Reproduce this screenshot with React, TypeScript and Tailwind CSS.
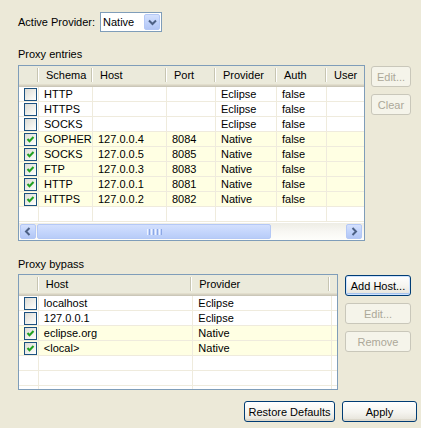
import { ReactNode } from 'react'

type Row = { checked: boolean; cells: string[] }

const entryWidths = ['w-[20px]', 'w-[54px]', 'w-[74px]', 'w-[49px]', 'w-[61px]', 'w-[50px]', 'flex-1']
const entryHeaders = ['', 'Schema', 'Host', 'Port', 'Provider', 'Auth', 'User']
const entryRows: Row[] = [
  { checked: false, cells: ['HTTP', '', '', 'Eclipse', 'false', ''] },
  { checked: false, cells: ['HTTPS', '', '', 'Eclipse', 'false', ''] },
  { checked: false, cells: ['SOCKS', '', '', 'Eclipse', 'false', ''] },
  { checked: true, cells: ['GOPHER', '127.0.0.4', '8084', 'Native', 'false', ''] },
  { checked: true, cells: ['SOCKS', '127.0.0.5', '8085', 'Native', 'false', ''] },
  { checked: true, cells: ['FTP', '127.0.0.3', '8083', 'Native', 'false', ''] },
  { checked: true, cells: ['HTTP', '127.0.0.1', '8081', 'Native', 'false', ''] },
  { checked: true, cells: ['HTTPS', '127.0.0.2', '8082', 'Native', 'false', ''] },
]

const bypassWidths = ['w-[20px]', 'w-[156px]', 'w-[140px]', 'flex-1']
const bypassHeaders = ['', 'Host', 'Provider', '']
const bypassRows: Row[] = [
  { checked: false, cells: ['localhost', 'Eclipse', ''] },
  { checked: false, cells: ['127.0.0.1', 'Eclipse', ''] },
  { checked: true, cells: ['eclipse.org', 'Native', ''] },
  { checked: true, cells: ['<local>', 'Native', ''] },
]

function Check({ on }: { on: boolean }) {
  return (
    <span className="flex h-[13px] w-[13px] items-center justify-center border border-[#1C5180] bg-[linear-gradient(135deg,#DCDBD5_0%,#F3F3EF_65%,#FFFFFF_100%)]">
      {on && (
        <svg width="11" height="11" viewBox="0 0 11 11">
          <path d="M2.5 5 L4.5 7.3 L8.5 3" fill="none" stroke="#21A121" strokeWidth="2" />
        </svg>
      )}
    </span>
  )
}

function Button({
  children,
  width,
  disabled,
  focused,
}: {
  children: ReactNode
  width: string
  disabled?: boolean
  focused?: boolean
}) {
  if (disabled) {
    return (
      <div
        className={`${width} flex h-[21px] items-center justify-center rounded-[3px] border border-[#C9C7BA] bg-[#F5F4EA] text-[#ACA899]`}
      >
        {children}
      </div>
    )
  }
  return (
    <div
      className={`${width} flex h-[21px] items-center justify-center rounded-[3px] border border-[#003C74] bg-[linear-gradient(180deg,#FFFFFF_0%,#F5F4EF_55%,#E5E2D8_100%)] text-black ${
        focused
          ? 'shadow-[inset_0_0_0_1px_#CEE3FF,inset_0_-2px_0_#A6C3EE]'
          : 'shadow-[inset_0_-2px_0_#DCD8CC]'
      }`}
    >
      {children}
    </div>
  )
}

function HeaderRow({ widths, headers }: { widths: string[]; headers: string[] }) {
  return (
    <div className="flex h-[21px] shrink-0 bg-[#EBEADB] shadow-[inset_0_-1px_0_#CBC7B8,inset_0_-2px_0_#D6D2C2,inset_0_-3px_0_#E2DECD]">
      {widths.map((w, i) => (
        <div key={i} className={`${w} flex h-[18px] items-center`}>
          <span className="flex-1 overflow-hidden whitespace-nowrap pl-[7px]">{headers[i]}</span>
          {i < widths.length - 1 && (
            <span className="h-[14px] w-[2px] border-l border-r border-l-[#C7C5B2] border-r-white" />
          )}
        </div>
      ))}
    </div>
  )
}

function BodyRow({ widths, row }: { widths: string[]; row?: Row }) {
  return (
    <div
      className={`flex h-[15px] shrink-0 border-b border-[#EFEBDD] ${
        row?.checked ? 'bg-[#FFFFE3]' : 'bg-white'
      }`}
    >
      {widths.map((w, i) => (
        <div
          key={i}
          className={`${w} flex h-full items-center overflow-hidden whitespace-nowrap ${
            i < widths.length - 1 ? 'border-r border-[#EFEBDD]' : ''
          } ${i === 0 ? 'pl-[5px]' : 'pl-[5px]'}`}
        >
          {row && (i === 0 ? <Check on={row.checked} /> : row.cells[i - 1])}
        </div>
      ))}
    </div>
  )
}

function ScrollArrow({ dir }: { dir: 'left' | 'right' }) {
  return (
    <div className="flex h-[15px] w-[16px] shrink-0 items-center justify-center rounded-[2px] border border-[#B4C8F6] bg-[linear-gradient(180deg,#D5E1FD_0%,#C1D3FB_50%,#B2C6F5_100%)]">
      <svg width="8" height="9" viewBox="0 0 8 9">
        <path
          d={dir === 'left' ? 'M5.5 1 L2 4.5 L5.5 8' : 'M2.5 1 L6 4.5 L2.5 8'}
          fill="none"
          stroke="#4D6185"
          strokeWidth="2"
        />
      </svg>
    </div>
  )
}

function HScrollbar() {
  return (
    <div className="flex h-[17px] shrink-0 items-center bg-[linear-gradient(180deg,#EEEDE5_0%,#F8F7F3_50%,#FEFEFB_100%)] pl-[1px] pr-[2px]">
      <ScrollArrow dir="left" />
      <div className="ml-[1px] flex h-[15px] w-[234px] items-center justify-center rounded-[2px] border border-[#B4C8F6] bg-[linear-gradient(180deg,#D3E0FD_0%,#C5D6FC_50%,#B8CCF8_100%)]">
        <div className="flex gap-[1px]">
          <span className="h-[6px] w-[1px] bg-[#EEF3FE]" />
          <span className="h-[6px] w-[1px] bg-[#8CA8E6]" />
          <span className="h-[6px] w-[1px] bg-[#EEF3FE]" />
          <span className="h-[6px] w-[1px] bg-[#8CA8E6]" />
          <span className="h-[6px] w-[1px] bg-[#EEF3FE]" />
          <span className="h-[6px] w-[1px] bg-[#8CA8E6]" />
          <span className="h-[6px] w-[1px] bg-[#EEF3FE]" />
          <span className="h-[6px] w-[1px] bg-[#8CA8E6]" />
        </div>
      </div>
      <div className="flex-1" />
      <ScrollArrow dir="right" />
    </div>
  )
}

function Table({
  width,
  widths,
  headers,
  rows,
  fill,
  bodyH,
  scroll,
}: {
  width: string
  widths: string[]
  headers: string[]
  rows: Row[]
  fill: number
  bodyH: string
  scroll?: boolean
}) {
  return (
    <div className={`${width} flex shrink-0 flex-col border border-[#7F9DB9] bg-white`}>
      <HeaderRow widths={widths} headers={headers} />
      <div className={`${bodyH} flex flex-col overflow-hidden`}>
        {rows.map((r, i) => (
          <BodyRow key={i} widths={widths} row={r} />
        ))}
        {Array.from({ length: fill }).map((_, i) => (
          <BodyRow key={`f${i}`} widths={widths} />
        ))}
      </div>
      {scroll && <HScrollbar />}
    </div>
  )
}

export default function App() {
  return (
    <div className="flex h-[428px] w-[421px] flex-col bg-[#ECE9D8] pl-[18px] pt-[12px] font-['Liberation_Sans',Arial,sans-serif] text-[11px] leading-[14px] text-black">
      <div className="flex h-[20px] items-center">
        <span>Active Provider:</span>
        <div className="ml-[5px] flex h-[20px] w-[62px] items-center border border-[#7F9DB9] bg-white">
          <span className="flex-1 pl-[2px]">Native</span>
          <div className="mr-[1px] flex h-[16px] w-[16px] items-center justify-center rounded-[2px] border border-[#B4C8F6] bg-[linear-gradient(180deg,#D5E1FD_0%,#C1D3FB_50%,#B2C6F5_100%)]">
            <svg width="9" height="7" viewBox="0 0 9 7">
              <path d="M1 1.5 L4.5 5 L8 1.5" fill="none" stroke="#4D6185" strokeWidth="2" />
            </svg>
          </div>
        </div>
      </div>

      <div className="mt-[15px]">Proxy entries</div>
      <div className="mt-[4px] flex items-start gap-[6px]">
        <Table
          width="w-[347px]"
          widths={entryWidths}
          headers={entryHeaders}
          rows={entryRows}
          fill={1}
          bodyH="h-[136px]"
          scroll
        />
        <div className="mt-[1px] flex flex-col gap-[7px]">
          <Button width="w-[40px]" disabled>
            Edit...
          </Button>
          <Button width="w-[40px]" disabled>
            Clear
          </Button>
        </div>
      </div>

      <div className="mt-[16px]">Proxy bypass</div>
      <div className="mt-[3px] flex items-start gap-[7px]">
        <Table
          width="w-[320px]"
          widths={bypassWidths}
          headers={bypassHeaders}
          rows={bypassRows}
          fill={3}
          bodyH="h-[93px]"
        />
        <div className="mt-[1px] flex flex-col gap-[7px]">
          <Button width="w-[66px]" focused>
            Add Host...
          </Button>
          <Button width="w-[66px]" disabled>
            Edit...
          </Button>
          <Button width="w-[66px]" disabled>
            Remove
          </Button>
        </div>
      </div>

      <div className="mt-[11px] flex justify-end gap-[7px] pr-[4px]">
        <Button width="w-[91px]">Restore Defaults</Button>
        <Button width="w-[75px]">Apply</Button>
      </div>
    </div>
  )
}
